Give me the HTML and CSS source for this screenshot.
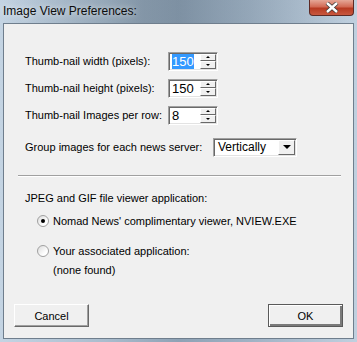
FILE: index.html
```html
<!DOCTYPE html>
<html lang="en">
<head>
  <meta charset="utf-8">
  <title>Image View Preferences</title>
  <link rel="stylesheet" href="styles.css">
</head>
<body>
  <div class="window">
    <div class="titlebar">
      <span class="title">Image View Preferences:</span>
      <span class="close">
        <svg width="14" height="11" viewBox="0 0 14 11"><path d="M2 1 L12 10 M12 1 L2 10" stroke="#3a3a3a" stroke-width="4"/><path d="M2 1 L12 10 M12 1 L2 10" stroke="#fff" stroke-width="2.4"/></svg>
      </span>
    </div>

    <div class="client">
      <div class="rows">
        <div class="row">
          <span class="label">Thumb-nail width (pixels):</span>
          <div class="spin">
            <div class="edit"><span class="sel">150</span></div>
            <div class="arrows">
              <span class="arrow"><i class="up"></i></span>
              <span class="arrow"><i class="down"></i></span>
            </div>
          </div>
        </div>
        <div class="row">
          <span class="label">Thumb-nail height (pixels):</span>
          <div class="spin">
            <div class="edit">150</div>
            <div class="arrows">
              <span class="arrow"><i class="up"></i></span>
              <span class="arrow"><i class="down"></i></span>
            </div>
          </div>
        </div>
        <div class="row">
          <span class="label">Thumb-nail Images per row:</span>
          <div class="spin">
            <div class="edit">8</div>
            <div class="arrows">
              <span class="arrow"><i class="up"></i></span>
              <span class="arrow"><i class="down"></i></span>
            </div>
          </div>
        </div>
      </div>

      <div class="row group-row">
        <span class="label wide">Group images for each news server:</span>
        <div class="combo">
          <div class="combo-text">Vertically</div>
          <span class="combo-btn"><i class="down big"></i></span>
        </div>
      </div>

      <hr class="sep">

      <p class="section">JPEG and GIF file viewer application:</p>
      <div class="radios">
        <label class="radio"><span class="dot checked"></span>Nomad News' complimentary viewer, NVIEW.EXE</label>
        <label class="radio"><span class="dot"></span>Your associated application:</label>
        <p class="none">(none found)</p>
      </div>

      <div class="buttons">
        <button class="btn">Cancel</button>
        <button class="btn default">OK</button>
      </div>
    </div>
  </div>
</body>
</html>
```

FILE: styles.css
```css
* { box-sizing: border-box; }
html, body { margin: 0; height: 100%; }
body {
  font-family: "Liberation Sans", Arial, sans-serif;
  font-size: 11px;
  color: #000;
}

.window {
  width: 357px;
  height: 342px;
  display: flex;
  flex-direction: column;
  padding: 0 3px 3px;
  background: linear-gradient(90deg, #c4d4e3 0%, #a9bccd 30%, #8ea2b5 50%, #9fb2c4 70%, #c0d0df 100%);
}

.titlebar {
  height: 23px;
  display: flex;
  align-items: flex-start;
  justify-content: space-between;
  background: linear-gradient(90deg, rgba(255,255,255,0) 0%, rgba(60,75,90,.25) 40%, rgba(60,75,90,.15) 60%, rgba(255,255,255,0) 100%);
}
.title {
  font-size: 12px;
  padding-top: 4px;
  color: #0c0c0c;
  text-shadow: 0 0 6px rgba(255,255,255,.8);
}
.close {
  width: 45px;
  height: 16px;
  border: 1px solid #5d2a25;
  border-top: none;
  border-radius: 0 0 4px 4px;
  background: linear-gradient(#e5a797 0%, #d26a55 45%, #b73a22 55%, #c8583f 100%);
  display: flex;
  align-items: center;
  justify-content: center;
}

.client {
  flex: 1;
  display: flex;
  flex-direction: column;
  background: #f0f0f0;
  border: 1px solid #6f7e8d;
  padding: 28px 0 0 21px;
  font-size: 11px;
}

.rows { display: flex; flex-direction: column; gap: 9px; }
.row { display: flex; align-items: center; height: 18px; }
.label { width: 143px; flex-shrink: 0; white-space: nowrap; }
.label.wide { width: 188px; }
.group-row { margin-top: 14px; }

.spin {
  display: flex;
  width: 50px;
  height: 19px;
  background: #fff;
  border-top: 1px solid #a0a0a0;
  border-left: 1px solid #a0a0a0;
  border-right: 1px solid #fff;
  border-bottom: 1px solid #fff;
  box-shadow: inset 1px 1px 0 #696969, inset -1px -1px 0 #e3e3e3;
  padding: 1px 1px 1px 2px;
}
.edit {
  flex: 1;
  font-size: 13px;
  line-height: 15px;
  padding-left: 1px;
}
.sel { background: #3399ff; color: #fff; }
.arrows { display: flex; flex-direction: column; width: 16px; }
.arrow {
  flex: 1;
  display: flex;
  align-items: center;
  justify-content: center;
  background: #f0f0f0;
  border-top: 1px solid #fff;
  border-left: 1px solid #fff;
  border-right: 1px solid #696969;
  border-bottom: 1px solid #696969;
}
.up, .down {
  width: 0;
  height: 0;
  border-left: 2px solid transparent;
  border-right: 2px solid transparent;
}
.up { border-bottom: 2px solid #000; }
.down { border-top: 2px solid #000; }
.down.big { border-left-width: 4px; border-right-width: 4px; border-top-width: 4px; }

.combo {
  display: flex;
  width: 84px;
  height: 19px;
  background: #fff;
  border-top: 1px solid #a0a0a0;
  border-left: 1px solid #a0a0a0;
  border-right: 1px solid #fff;
  border-bottom: 1px solid #fff;
  box-shadow: inset 1px 1px 0 #696969, inset -1px -1px 0 #e3e3e3;
  padding: 1px;
}
.combo-text { flex: 1; font-size: 12px; line-height: 15px; padding-left: 3px; }
.combo-btn {
  width: 17px;
  display: flex;
  align-items: center;
  justify-content: center;
  background: #f0f0f0;
  border-top: 1px solid #fff;
  border-left: 1px solid #fff;
  border-right: 1px solid #696969;
  border-bottom: 1px solid #696969;
}

.sep {
  margin: 19px 12px 0 -7px;
  border: 0;
  border-top: 1px solid #a0a0a0;
  border-bottom: 1px solid #fff;
}

.section { margin: 15px 0 0; }
.radios { display: flex; flex-direction: column; padding-left: 12px; }
.radio {
  display: flex;
  align-items: center;
  gap: 4px;
  height: 16px;
  margin-top: 14px;
  white-space: nowrap;
}
.radio:first-child { margin-top: 9px; }
.dot {
  width: 12px;
  height: 12px;
  border-radius: 50%;
  background: linear-gradient(135deg, #dcdcdc, #fff 70%);
  border: 1px solid #a0a0a0;
  display: flex;
  align-items: center;
  justify-content: center;
}
.dot.checked::after {
  content: "";
  width: 4px;
  height: 4px;
  border-radius: 50%;
  background: #000;
}
.none { margin: 5px 0 0 16px; }

.buttons {
  display: flex;
  justify-content: space-between;
  margin: auto 10px 11px -11px;
}
.btn {
  width: 75px;
  height: 23px;
  font-family: "Liberation Sans", Arial, sans-serif;
  font-size: 11px;
  background: #f0f0f0;
  border-top: 1px solid #fff;
  border-left: 1px solid #fff;
  border-right: 1px solid #696969;
  border-bottom: 1px solid #696969;
  box-shadow: inset -1px -1px 0 #a0a0a0;
  padding: 0;
}
.btn.default {
  border: 1px solid #5a5a5a;
  box-shadow: inset 1px 1px 0 #fff, inset -2px -2px 0 #7a7a7a;
}
```
